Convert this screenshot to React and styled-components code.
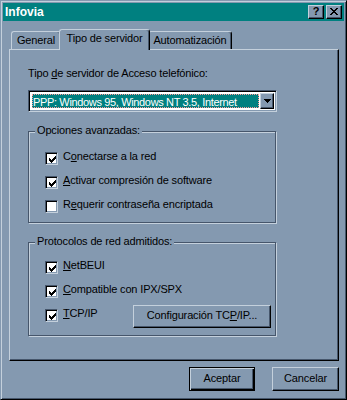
import React from 'react';
import styled, { createGlobalStyle } from 'styled-components';

const C = {
  face: '#8499b0',
  light: '#c4d0dc',
  shadow: '#46566b',
  dark: '#000000',
  teal: '#008080',
};

const Global = createGlobalStyle`
  html, body { margin: 0; padding: 0; background: ${C.face}; }
  body { font-family: "Liberation Sans", Arial, sans-serif; font-size: 11px; letter-spacing: -0.15px; color: #000; }
  * { box-sizing: border-box; }
  u { text-decoration: underline; text-underline-offset: 1px; }
`;

const Window = styled.div`
  width: 347px;
  height: 400px;
  background: ${C.face};
  border: 1px solid;
  border-color: ${C.face} ${C.dark} ${C.dark} ${C.face};
  box-shadow: inset 1px 1px 0 ${C.light}, inset -1px -1px 0 ${C.shadow};
  padding: 2px;
  display: flex;
  flex-direction: column;
`;

const TitleBar = styled.div`
  height: 18px;
  background: ${C.teal};
  display: flex;
  align-items: center;
  padding: 0 2px;
  gap: 2px;
`;

const TitleText = styled.div`
  flex: 1;
  color: #fff;
  font-weight: bold;
  font-size: 12px;
  letter-spacing: 0;
  line-height: 14px;
`;

const TitleButton = styled.div`
  width: 16px;
  height: 14px;
  background: ${C.face};
  border: 1px solid;
  border-color: ${C.light} ${C.dark} ${C.dark} ${C.light};
  box-shadow: inset -1px -1px 0 ${C.shadow};
  display: flex;
  align-items: center;
  justify-content: center;
  font-weight: bold;
  font-size: 11px;
  line-height: 11px;
  padding-bottom: 1px;
`;

const Body = styled.div`
  flex: 1;
  display: flex;
  flex-direction: column;
  padding: 8px 5px 0 6px;
`;

const TabRow = styled.div`
  height: 20px;
  display: flex;
  align-items: flex-end;
  padding-left: 2px;
`;

const Tab = styled.div`
  position: relative;
  z-index: ${(p) => (p.$active ? 2 : 1)};
  width: ${(p) => p.$w + (p.$active ? 4 : 0)}px;
  height: ${(p) => (p.$active ? 21 : 18)}px;
  margin: ${(p) => (p.$active ? '0 -2px -1px -2px' : '0')};
  background: ${C.face};
  border: 1px solid;
  border-bottom: none;
  border-color: ${C.light} ${C.dark} ${C.face} ${C.light};
  border-radius: 3px 3px 0 0;
  box-shadow: inset -1px 0 0 ${C.shadow};
  text-align: center;
  line-height: 13px;
  padding-top: 2px;
`;

const Panel = styled.div`
  width: 330px;
  height: 312px;
  border: 1px solid;
  border-color: ${C.light} ${C.dark} ${C.dark} ${C.light};
  box-shadow: inset -1px -1px 0 ${C.shadow};
  padding: 17px 0 0 18px;
  display: flex;
  flex-direction: column;
`;

const Label = styled.div`
  line-height: 13px;
  height: 13px;
`;

const Combo = styled.div`
  margin-top: 10px;
  width: 249px;
  height: 22px;
  background: #fff;
  border: 1px solid;
  border-color: ${C.shadow} ${C.light} ${C.light} ${C.shadow};
  box-shadow: inset 1px 1px 0 ${C.dark}, inset -1px -1px 0 ${C.face};
  padding: 2px;
  display: flex;
`;

const Selection = styled.div`
  flex: 1;
  margin: 1px;
  background: ${C.teal};
  color: #fff;
  border: 1px dotted #ff9c9c;
  line-height: 14px;
  letter-spacing: -0.35px;
  white-space: nowrap;
  overflow: hidden;
`;

const ArrowButton = styled.div`
  width: 14px;
  background: ${C.face};
  border: 1px solid;
  border-color: ${C.light} ${C.dark} ${C.dark} ${C.light};
  box-shadow: inset -1px -1px 0 ${C.shadow};
  display: flex;
  align-items: center;
  justify-content: center;
`;

const Group = styled.div`
  position: relative;
  margin-top: 19px;
  width: 248px;
  height: ${(p) => p.$h}px;
  border: 1px solid ${C.shadow};
  box-shadow: inset 1px 1px 0 ${C.light}, 1px 1px 0 ${C.light};
  padding: ${(p) => p.$pt}px 4px 0 16px;
  display: flex;
  flex-direction: column;
`;

const Legend = styled.div`
  position: absolute;
  top: -8px;
  left: 6px;
  padding: 0 2px;
  background: ${C.face};
  line-height: 13px;
`;

const CheckRow = styled.div`
  height: 24px;
  display: flex;
  align-items: flex-start;
`;

const Box = styled.div`
  width: 13px;
  height: 13px;
  margin-top: 6px;
  background: #fff;
  border: 1px solid;
  border-color: ${C.shadow} ${C.light} ${C.light} ${C.shadow};
  box-shadow: inset 1px 1px 0 ${C.dark}, inset -1px -1px 0 ${C.face};
  display: flex;
  align-items: center;
  justify-content: center;
  padding: 1px 0 0 1px;
`;

const CheckLabel = styled.div`
  margin-left: 5px;
  margin-top: 4px;
  line-height: 13px;
`;

const Button = styled.div`
  width: ${(p) => p.$w}px;
  height: ${(p) => p.$h}px;
  margin: ${(p) => p.$m || '0'};
  background: ${C.face};
  border: 1px solid;
  border-color: ${(p) =>
    p.$default ? C.dark : `${C.light} ${C.dark} ${C.dark} ${C.light}`};
  box-shadow: ${(p) =>
    p.$default
      ? `inset 1px 1px 0 ${C.light}, inset -1px -1px 0 ${C.dark}, inset -2px -2px 0 ${C.shadow}`
      : `inset -1px -1px 0 ${C.shadow}`};
  display: flex;
  align-items: center;
  justify-content: center;
  line-height: 13px;
  padding-bottom: 2px;
`;

const ButtonRow = styled.div`
  margin-top: 6px;
  display: flex;
  justify-content: flex-end;
  gap: 17px;
`;

const Check = () => (
  <svg width="7" height="7" viewBox="0 0 7 7" shapeRendering="crispEdges">
    <path
      d="M0 2h1v3H0z M1 3h1v3H1z M2 4h1v3H2z M3 3h1v3H3z M4 2h1v3H4z M5 1h1v3H5z M6 0h1v3H6z"
      fill="#000"
    />
  </svg>
);

const CheckItem = ({ checked, children }) => (
  <>
    <Box>{checked && <Check />}</Box>
    <CheckLabel>{children}</CheckLabel>
  </>
);

export default function App() {
  return (
    <>
      <Global />
      <Window>
        <TitleBar>
          <TitleText>Infovia</TitleText>
          <TitleButton>?</TitleButton>
          <TitleButton>
            <svg width="8" height="7" viewBox="0 0 8 7" shapeRendering="crispEdges">
              <path
                d="M0 0h2v1H0z M6 0h2v1H6z M1 1h2v1H1z M5 1h2v1H5z M2 2h4v1H2z M3 3h2v1H3z M2 4h4v1H2z M1 5h2v1H1z M5 5h2v1H5z M0 6h2v1H0z M6 6h2v1H6z"
                fill="#000"
              />
            </svg>
          </TitleButton>
        </TitleBar>
        <Body>
          <TabRow>
            <Tab $w={50}>General</Tab>
            <Tab $w={87} $active>Tipo de servidor</Tab>
            <Tab $w={84}>Automatización</Tab>
          </TabRow>
          <Panel>
            <Label>
              Tipo <u>d</u>e servidor de Acceso telefónico:
            </Label>
            <Combo>
              <Selection>PPP: Windows 95, Windows NT 3.5, Internet</Selection>
              <ArrowButton>
                <svg width="7" height="4" viewBox="0 0 7 4" shapeRendering="crispEdges">
                  <path d="M0 0h7v1H0z M1 1h5v1H1z M2 2h3v1H2z M3 3h1v1H3z" fill="#000" />
                </svg>
              </ArrowButton>
            </Combo>
            <Group $h={92} $pt={14}>
              <Legend>Opciones avanzadas:</Legend>
              <CheckRow>
                <CheckItem checked>
                  C<u>o</u>nectarse a la red
                </CheckItem>
              </CheckRow>
              <CheckRow>
                <CheckItem checked>
                  <u>A</u>ctivar compresión de software
                </CheckItem>
              </CheckRow>
              <CheckRow>
                <CheckItem>
                  R<u>e</u>querir contraseña encriptada
                </CheckItem>
              </CheckRow>
            </Group>
            <Group $h={94} $pt={12}>
              <Legend>Protocolos de red admitidos:</Legend>
              <CheckRow>
                <CheckItem checked>
                  <u>N</u>etBEUI
                </CheckItem>
              </CheckRow>
              <CheckRow>
                <CheckItem checked>
                  <u>C</u>ompatible con IPX/SPX
                </CheckItem>
              </CheckRow>
              <CheckRow>
                <CheckItem checked>
                  <u>T</u>CP/IP
                </CheckItem>
                <Button $w={138} $h={23} $m="2px 0 0 auto">
                  <span>
                    Configuración TC<u>P</u>/IP...
                  </span>
                </Button>
              </CheckRow>
            </Group>
          </Panel>
          <ButtonRow>
            <Button $w={66} $h={24} $default>
              Aceptar
            </Button>
            <Button $w={67} $h={24}>
              Cancelar
            </Button>
          </ButtonRow>
        </Body>
      </Window>
    </>
  );
}
